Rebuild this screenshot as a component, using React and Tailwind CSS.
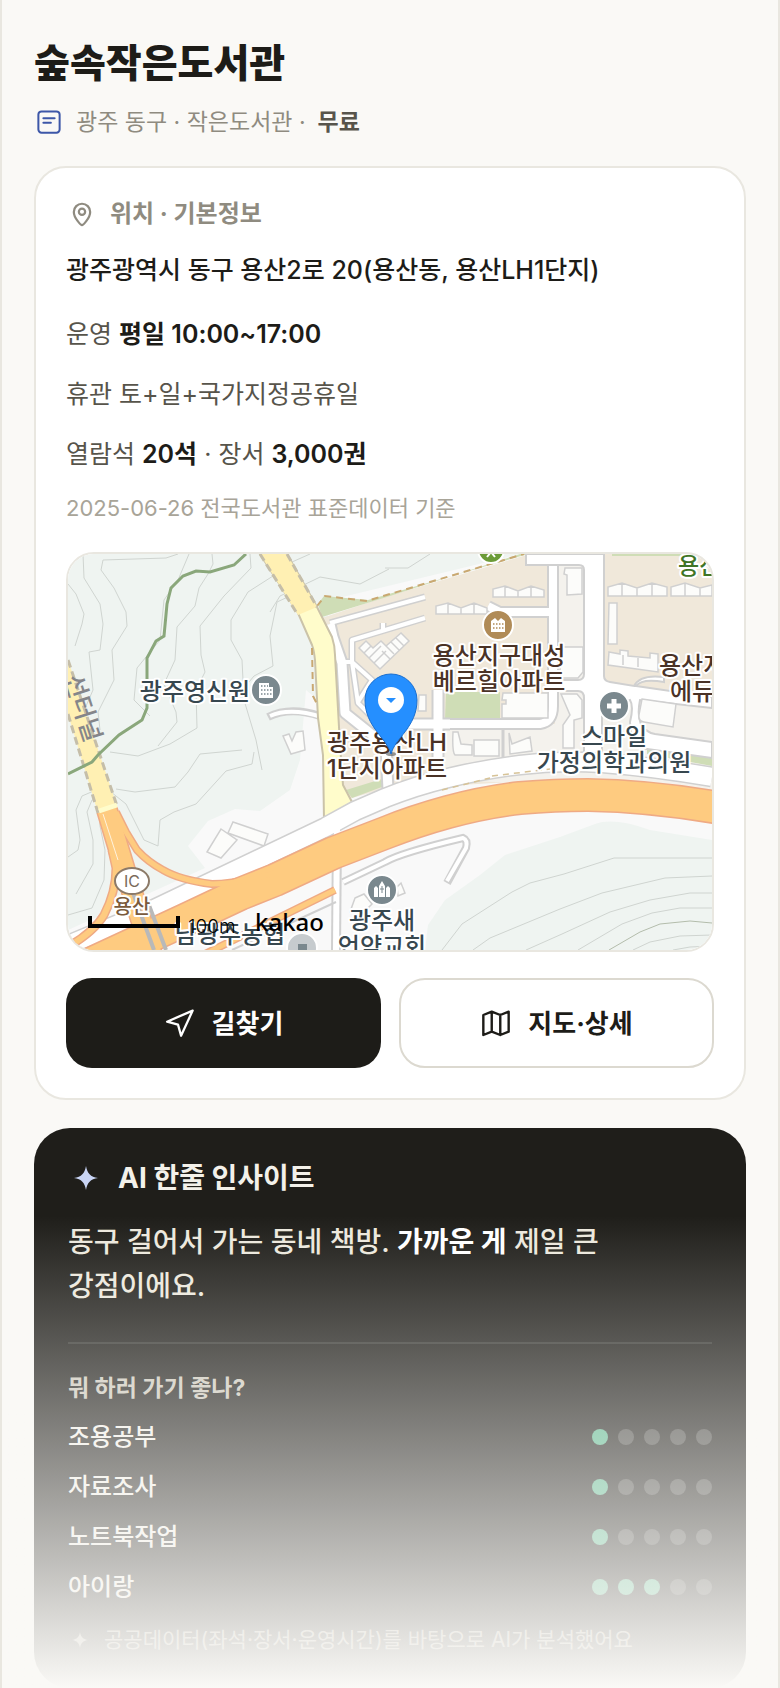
import React from "react";

const FONT = "font-['Inter','Noto_Sans_CJK_KR',sans-serif]";

function Contours() {
  return (
    <g fill="none" stroke="#cfd4d0" strokeWidth="1">
      <path d="M83 554 L84 578 L100 604 L103 624 L100 650 L89 652 L93 690 L80 720" />
      <path d="M178 554 L166 558 L103 560 L101 570 L114 588 L126 612 L127 626 L112 650 L114 680 L98 712 L100 730" />
      <path d="M68 584 L76 594 L84 614 L82 624 L75 646" />
      <path d="M212 554 L213 564 L208 574 L199 588 L195 606 L177 627 L175 660 L164 684 L176 712 L177 722 L158 746" />
      <path d="M250 554 L251 568 L224 596 L200 626 L201 655 L205 672 L196 690 L197 728 L170 744 L138 756 L110 752" />
      <path d="M273 576 L248 592 L231 620 L231 640 L242 660 L244 700 L256 740 L262 770" />
      <path d="M290 596 L277 602 L270 636 L273 666 L254 676 L244 688" />
      <path d="M389 569 L360 584 L320 577 L314 580 L280 596 L270 612" />
      <path d="M310 554 L292 562 L276 578" />
      <path d="M189 554 L178 580 L164 600 L160 640 L137 668 L134 700 L150 716" />
      <path d="M254 752 L252 764 L226 771 L196 804 L174 812 L160 820 L158 846 L144 840 L126 804 L106 788" />
      <path d="M242 750 L200 754 L188 772 L175 787 L135 792 L116 789" />
      <path d="M96 790 L82 796 L76 810 L80 840 L78 850 L68 857" />
      <path d="M104 796 L92 800 L87 812 L93 840 L93 864 L76 894" />
      <path d="M99 806 L100 826 L105 850 L104 880 L92 908 L68 915" />
      <path d="M442 950 L462 924 L512 892 L530 883 L564 874 L614 858 L712 858" />
      <path d="M473 950 L490 938 L560 909 L602 893 L665 878 L712 876" />
      <path d="M526 950 L562 934 L610 912 L650 900 L690 893 L712 893" />
      <path d="M578 950 L622 924 L652 913 L680 908 L712 908" />
      <path d="M609 950 L640 932 L660 924 L690 921 L712 923" stroke="#b3bcab" />
      <path d="M633 950 L650 942 L680 936 L712 935" />
      <path d="M673 950 L690 947 L712 946" />
      <path d="M385 568 L408 568 L430 554" />
    </g>
  );
}

function Label({ x, y, lines, fill = "#37474f", anchor = "middle", size = 24 }) {
  return (
    <text
      x={x}
      textAnchor={anchor}
      fontSize={size}
      fontWeight="500"
      fill={fill}
      stroke="#ffffff"
      strokeWidth="4"
      strokeLinejoin="round"
      paintOrder="stroke"
    >
      {lines.map((line, i) => (
        <tspan key={line} x={x} y={y + i * 26}>
          {line}
        </tspan>
      ))}
    </text>
  );
}

const FRONT_ROAD = "M68 945 L150 911 L326 827 L355 811 L385 798 Q415 786 448 778 Q485 769 520 765 Q560 760 602 763 Q655 767 712 777";
const HIGHWAY = "M90 964 L187 919 L240 894 L275 880 L333 853 L385 833 Q415 821 448 812 Q485 802 520 798 Q555 795 588 795 Q650 796 720 808";
const COMPLEX_ROADS =
  "M330 623 L425 597 M352 662 L372 680 L358 702 M342 662 H353 M425 618 L352 640 V662 L358 703 L372 717 M383 630 V623";

function LocationMap() {
  const road = "#d0d0d0";
  return (
    <svg
      viewBox="68 554 644 396"
      preserveAspectRatio="xMidYMid slice"
      className="block h-[396px] w-full"
      role="img"
      aria-label="숲속작은도서관 주변 지도"
    >
      <rect x="68" y="554" width="644" height="396" fill="#f9f9f9" />
      <path d="M68 554 H520 L330 600 L318 700 L306 690 L300 760 L290 790 L260 811 L235 809 L208 821 L188 846 L205 868 L68 930 Z" fill="#eff4f1" />
      <path d="M425 950 L428 925 L445 900 L480 875 L505 855 L560 837 L595 824 Q614 817 650 830 L712 840 V950 Z" fill="#eff4f1" />
      <Contours />

      <path d="M322 618 L385 597 L530 554 H712 V700 L540 780 L380 790 L345 800 L334 720 Z" fill="#f0e8da" />
      <path d="M555 564 H602 V686 H712 V790 L440 780 V724 H555 Z" fill="#f4f2ed" />
      <path d="M602 554 H712 V694 L610 684 Z" fill="#f0e8da" />
      <path d="M318 604 L324 596 L368 600 L528 554 H520 L390 596 L322 617 Z" fill="#cfddb6" />
      <path d="M612 554 H712 V556 H612 Z" fill="#cfddb6" />
      <path d="M317 606 L325 596 L367 601 L390 594 L524 554" fill="none" stroke="#c9a871" strokeWidth="2" strokeDasharray="7 5" />
      <path d="M446 692 H500 V719 H445 Z" fill="#cfddb6" />
      <path d="M647 745 L712 755 V766 L647 754 Z" fill="#cfddb6" />
      <path d="M346 790 L385 778 L390 784 L352 798 Z" fill="#cfddb6" />

      <g fill="none" stroke={road} strokeLinejoin="round">
        <path d={COMPLEX_ROADS} strokeWidth="7" />
        <path d="M330 624 L333 637 L342 663 L345 713 L370 733 L386 748 L388 790 M398 724 H450 M438 690 V768" strokeWidth="13" />
        <path d="M440 724 H540 Q553 722 553 706 V560 M553 612 H500 L488 606" strokeWidth="12" />
      </g>
      <g fill="none" stroke="#fff" strokeLinejoin="round">
        <path d={COMPLEX_ROADS} strokeWidth="4" />
        <path d="M330 624 L333 637 L342 663 L345 713 L370 733 L386 748 L388 790 M398 724 H450 M438 690 V768" strokeWidth="9" />
        <path d="M440 724 H540 Q553 722 553 706 V560 M553 612 H500 L488 606" strokeWidth="8" />
      </g>
      <path d="M503 728 V760" stroke={road} strokeWidth="3" />
      <path d="M526 554 V565 H579 Q584 565 584 570 V674 Q584 680 578 680 H558 V691 H578 Q584 691 584 698 V765 H602 V710 L630 700 Q634 706 630 722 Q630 740 640 748 L712 758 V742 L655 734 Q634 730 640 700 L712 708 V697 L636 686 Q642 678 664 682 V677 Q640 674 634 686 L610 682 Q604 681 604 676 V554 Z" fill="#fff" stroke={road} strokeWidth="2" />

      <g fill="#fcfcfa" stroke={road} strokeWidth="1.5">
        <path d="M493 597 V589 L505 586 L518 591 L531 586 L544 590 V597 Z M505 586 V597 M518 591 V597 M531 586 V597" />
        <path d="M436 614 V606 L448 603 L461 608 L474 603 L487 608 V614 Z M448 603 V614 M461 608 V614 M474 603 V614" />
        <path d="M608 596 V587 L622 583 L637 588 L652 583 L667 587 V596 Z M622 583 V596 M637 588 V596 M652 583 V596" />
        <path d="M671 596 V587 L685 583 L700 588 L712 585 V596 Z M685 583 V596 M700 588 V596" />
        <path d="M609 603 H617 V644 H608 Z" />
        <path d="M609 652 L620 654 V650 L628 651 V656 L650 658 V653 L658 654 V672 L608 665 Z M623 655 V665 M638 657 V667" />
        <path d="M565 568 H582 V594 L567 595 V575 L564 574 Z" />
        <path d="M560 647 H583 V672 L578 678 H560 Z" />
        <path d="M503 693 H548 V718 H502 V704 H506 V700 H502 Z" />
        <path d="M561 694 H577 L582 700 V718 L574 720 V748 H563 V725 L570 715 Z" />
        <path d="M642 699 L676 704 L673 727 L644 722 Q638 721 639 715 Z" />
        <path d="M453 732 H458 L461 744 L472 745 V755 H455 Q452 752 453 732 Z M474 740 H499 V756 H474 Z M509 733 L512 744 L530 737 L532 751 L510 754 Z" />
        <path d="M419 695 H426 V711 H418 Z" />
        <path d="M359 648 L366 641 L373 648 L381 641 L386 646 L401 633 L409 641 L380 669 Z M364 653 L371 646 M369 658 L381 646 M374 663 L386 651 M382 651 L390 659 M386 646 L394 654 M391 642 L399 650 M396 638 L404 646" />
        <path d="M283 736 L289 734 L292 741 L296 732 L303 731 L305 750 L291 754 Z" />
        <path d="M233 822 L268 834 L264 846 L228 833 Z M221 829 L237 840 L221 858 L207 852 Z" />
        <path d="M355 898 L364 894 L372 904 L362 914 L350 912 Z M397 887 L401 883 L405 893 L398 896 Z" />
      </g>
      <path d="M268 717 Q290 706 320 716" fill="none" stroke={road} strokeWidth="8" />
      <path d="M270 716 Q290 707 322 717" fill="none" stroke="#fff" strokeWidth="4" />

      <path d="M260 554 H287 L317 607 L332 637 Q335 646 335 655 L340 745 L343 785 L352 802 L324 820 L323 755 L318 718 L315 660 Q314 650 312 645 L298 613 Z" fill="#fffccb" stroke="#cbc3a9" strokeWidth="2" />
      <path d="M260 554 H287 L317 607 L298 615 Z" fill="#fff0b3" />
      <path d="M260 554 L298 615 M287 554 L317 607" stroke="#c5bea9" strokeWidth="3" strokeDasharray="8 4" />
      <path d="M312 648 L313 696 L317 704" fill="none" stroke="#c9a871" strokeWidth="2" strokeDasharray="7 5" />

      <path d={FRONT_ROAD} fill="none" stroke={road} strokeWidth="21" />
      <path d={FRONT_ROAD} fill="none" stroke="#fff" strokeWidth="18" />
      <path d="M337 836 L336 950" stroke={road} strokeWidth="10" />
      <path d="M337 822 L336 950" stroke="#fff" strokeWidth="6" />
      <path d="M343 882 L385 862 Q400 853 463 838 Q468 840 466 848 L447 883" fill="none" stroke={road} strokeWidth="8" />
      <path d="M343 882 L385 862 Q400 853 463 838 Q468 840 466 848 L447 881" fill="none" stroke="#fff" strokeWidth="4" />
      <path d="M232 950 L336 902" stroke={road} strokeWidth="2" />

      <g fill="none" stroke="#efaa84" strokeLinejoin="round">
        <path d={HIGHWAY} strokeWidth="34" />
        <path d="M107 810 L125 870 L152 954" strokeWidth="22" />
        <path d="M116 812 L126 832 L137 850 Q148 862 163 870 Q180 880 212 884 Q235 884 275 873" strokeWidth="8" />
        <path d="M112 850 L116 868 Q116 892 104 915 Q94 932 66 948" strokeWidth="9" />
        <path d="M205 954 L335 890" strokeWidth="8" />
      </g>
      <g fill="none" stroke="#fecb80" strokeLinejoin="round">
        <path d={HIGHWAY} strokeWidth="31" />
        <path d="M107 810 L125 870 L152 954" strokeWidth="19" />
        <path d="M116 812 L126 832 L137 850 Q148 862 163 870 Q180 880 212 884 Q235 884 275 873" strokeWidth="5" />
        <path d="M112 850 L116 868 Q116 892 104 915 Q94 932 66 948" strokeWidth="6" />
        <path d="M205 954 L335 890" strokeWidth="5" />
      </g>
      <path d="M103 814 L118 860" stroke="#fff3dd" strokeWidth="1" />
      <path d="M132 890 L154 950 M147 900 L166 950" stroke="#b9b9b9" strokeWidth="4" />

      <path d="M68 660 L117 806 L98 813 L68 714 Z" fill="#fff0b3" />
      <path d="M68 660 L117 806 M68 714 L98 813" stroke="#c5bea9" strokeWidth="3" strokeDasharray="8 4" />
      <path d="M99 811 L117 805" stroke="#fffccb" strokeWidth="5" />
      <path d="M246 554 L234 565 L210 572 L196 571 L183 576 L171 588 L167 604 L164 636 L156 641 L147 658 L147 708 L142 720 L119 735 L98 755 L92 762 L68 774" fill="none" stroke="#8aa77b" strokeWidth="3" />
      <text x="0" y="0" transform="translate(64 678) rotate(72)" fontSize="25" fontWeight="500" fill="#85868a">
        선터널
      </text>
      <path d="M442 790 L490 778 M492 776 L550 769" stroke="#d7c397" strokeWidth="1.5" strokeDasharray="6 5" />

      <g stroke="#fff" strokeWidth="2">
        <circle cx="491" cy="550" r="13" fill="#6b9b37" />
        <circle cx="498" cy="625" r="15" fill="#b08b57" />
        <circle cx="266" cy="690" r="15" fill="#7a888e" />
        <circle cx="614" cy="706" r="15" fill="#7a888e" />
        <circle cx="382" cy="890" r="15" fill="#7a888e" />
        <circle cx="302" cy="948" r="15" fill="#c6cbce" />
      </g>
      <path d="M487 557 L491 552 L495 557" fill="none" stroke="#fff" strokeWidth="2" />
      <path d="M491 621 L495 618 L498 621 L501 618 L505 621 V632 H491 Z" fill="#fff" />
      <path d="M259 683 H269 V687 H273 V698 H259 Z" fill="#fff" />
      <path d="M261 686 H268 M261 690 H272 M261 694 H272" stroke="#7a888e" strokeWidth="1.5" strokeDasharray="1.5 1.5" />
      <path d="M493 624 H504 M493 628 H504" stroke="#b08b57" strokeWidth="1.5" strokeDasharray="1.5 1.5" />
      <path d="M614 699 V713 M607 706 H621" stroke="#fff" strokeWidth="5" />
      <path d="M374 897 V888 L376 886 L378 888 V897 Z M379 897 V886 L382 881 L385 886 V897 Z M386 897 V888 L388 886 L390 888 V897 Z" fill="#fff" />
      <path d="M382 886 V893 M380 889 H384" stroke="#7a888e" strokeWidth="1" />
      <rect x="298" y="944" width="9" height="6" fill="#7a888e" />

      <Label x={195} y={700} lines={["광주영신원"]} />
      <Label x={499} y={664} lines={["용산지구대성", "베르힐아파트"]} fill="#4a3226" />
      <Label x={387} y={751} lines={["광주용산LH", "1단지아파트"]} fill="#4a3226" />
      <Label x={614} y={745} lines={["스마일", "가정의학과의원"]} />
      <Label x={659} y={674} anchor="start" lines={["용산지"]} fill="#4a3226" />
      <Label x={670} y={700} anchor="start" lines={["에듀"]} fill="#4a3226" />
      <Label x={678} y={574} anchor="start" lines={["용산"]} fill="#3f7526" size={23} />
      <Label x={382} y={929} lines={["광주새", "언약교회"]} />
      <Label x={230} y={943} lines={["남광주농협"]} />
      <Label x={132} y={914} lines={["용산"]} size={20} fill="#7a5a3c" />
      <ellipse cx="132" cy="881" rx="17" ry="13" fill="#fff" stroke="#8c7a68" strokeWidth="2" />
      <text x="132" y="887" textAnchor="middle" fontSize="16" fill="#7a6a5a">
        IC
      </text>

      <ellipse cx="391" cy="754" rx="5" ry="2" fill="#555" opacity="0.6" />
      <path d="M391 754 C387 738 365 727 365 700 A26 26 0 0 1 417 700 C417 727 395 738 391 754 Z" fill="#258fff" stroke="#1a6fd0" strokeWidth="1" />
      <circle cx="391" cy="700" r="13" fill="#fff" />
      <path d="M386 698 H396 L391 703 Z" fill="#258fff" />

      <path d="M90 916 V926 H178 V916" fill="none" stroke="#000" strokeWidth="4" />
      <text x="188" y="933" fontSize="19" fontWeight="300" fill="#000">
        100m
      </text>
      <text x="255" y="931" fontSize="24" fontWeight="500" fill="#000" className="font-['Noto_Sans',sans-serif]">
        kakao
      </text>
    </svg>
  );
}

function Icon({ className, children }) {
  return (
    <svg
      viewBox="0 0 24 24"
      fill="none"
      stroke="currentColor"
      strokeLinecap="round"
      strokeLinejoin="round"
      aria-hidden="true"
      className={className}
    >
      {children}
    </svg>
  );
}

function Sparkle({ className }) {
  return (
    <svg viewBox="0 0 24 24" fill="currentColor" aria-hidden="true" className={className}>
      <path d="M12 0 C13.2 7.500 16.500 10.800 24 12 C16.500 13.200 13.200 16.500 12 24 C10.800 16.500 7.500 13.200 0 12 C7.500 10.800 10.800 7.500 12 0 Z" />
    </svg>
  );
}

const ratings = [
  ["조용공부", 1],
  ["자료조사", 1],
  ["노트북작업", 1],
  ["아이랑", 3],
];

function Rating({ name, score }) {
  return (
    <li className="flex h-[50px] items-center justify-between">
      <span className="text-2xl font-medium text-[#f3f1ea]">{name}</span>
      <span className="flex gap-2.5" role="img" aria-label={`${name} ${score}/5`}>
        {[1, 2, 3, 4, 5].map((n) => (
          <span
            key={n}
            className={n <= score ? "size-4 rounded-full bg-[#5bb78e]" : "size-4 rounded-full bg-white/20"}
          />
        ))}
      </span>
    </li>
  );
}

export default function App() {
  return (
    <main className={`relative border-x-2 border-[#e9e7e0] bg-[#faf9f6] px-8 pt-9 text-[#1d1c18] ${FONT}`}>
      <h1 className="text-[39px] leading-[54px] font-extrabold">숲속작은도서관</h1>
      <div className="mt-3.5 flex h-9 items-center text-[23px] text-[#8f8b80]">
        <Icon className="mr-3 size-[30px] text-[#3d57a8]">
          <rect x="3.5" y="3.5" width="17" height="17" rx="2.5" strokeWidth="1.6" />
          <path d="M7.5 9h9M7.5 12.6h6" strokeWidth="1.6" />
        </Icon>
        <span>광주 동구 · 작은도서관 ·</span>
        <strong className="ml-3 font-semibold text-[#57544b]">무료</strong>
      </div>

      <section className="mt-[26px] rounded-[32px] border-2 border-[#e9e7e0] bg-white p-[30px]">
        <h2 className="flex h-8 items-center gap-3.5 text-2xl font-bold text-[#8f8b80]">
          <Icon className="ml-0.5 size-7">
            <path d="M12 21.500c-.8 0-7-6-7-11.300a7 7 0 0 1 14 0c0 5.300-6.200 11.300-7 11.300Z" strokeWidth="1.9" />
            <circle cx="12" cy="10" r="2.700" strokeWidth="1.9" />
          </Icon>
          위치 · 기본정보
        </h2>
        <p className="mt-5 text-[25px] leading-10 font-medium">광주광역시 동구 용산2로 20(용산동, 용산LH1단지)</p>
        <div className="mt-[22px] flex flex-col gap-4 text-[25px] leading-[44px] text-[#57544b]">
          <p>
            운영 <strong className="font-semibold text-[#1d1c18]">평일 10:00~17:00</strong>
          </p>
          <p>휴관 토+일+국가지정공휴일</p>
          <p>
            열람석 <strong className="font-semibold text-[#1d1c18]">20석</strong> · 장서{" "}
            <strong className="font-semibold text-[#1d1c18]">3,000권</strong>
          </p>
        </div>
        <p className="mt-4 text-[22px] leading-8 text-[#a8a498]">2025-06-26 전국도서관 표준데이터 기준</p>

        <div className="mt-7 overflow-hidden rounded-[28px] border-2 border-[#e9e7e0]">
          <LocationMap />
        </div>

        <div className="mt-[26px] grid grid-cols-2 gap-[18px] text-[26px] font-bold">
          <button type="button" className="flex h-[90px] items-center justify-center gap-4 rounded-[26px] bg-[#1d1c18] text-white">
            <Icon className="size-8">
              <path d="M21.500 2.700 2.300 11l8.200 2.200 2.300 8.300L21.500 2.700Z" strokeWidth="1.700" />
            </Icon>
            길찾기
          </button>
          <button type="button" className="flex h-[90px] items-center justify-center gap-4 rounded-[26px] border-2 border-[#dcd9d0] bg-white">
            <Icon className="size-8">
              <path d="m2.500 6 6.300-2.500 6.400 2.500 6.300-2.500v15L15.200 21l-6.400-2.500L2.500 21V6Z M8.800 3.500v15 M15.200 6v15" strokeWidth="1.800" />
            </Icon>
            지도·상세
          </button>
        </div>
      </section>

      <section className="mt-7 rounded-[36px] bg-[#1f1e1a] px-[34px] py-8">
        <h2 className="flex h-9 items-center gap-5 text-[28px] font-bold text-[#f3f1ea]">
          <Sparkle className="ml-1.5 size-6 text-[#c9d5f5]" />
          AI 한줄 인사이트
        </h2>
        <p className="mt-6 max-w-[560px] text-[28px] leading-[44px] font-medium text-[#ece8dd]">
          동구 걸어서 가는 동네 책방. <strong className="font-bold text-white">가까운 게</strong> 제일 큰 강점이에요.
        </p>
        <hr className="mt-[34px] border-t-2 border-white/10" />
        <h3 className="mt-7 text-[23px] leading-8 font-bold text-[#cbc7bb]">뭐 하러 가기 좋나?</h3>
        <ul className="mt-2">
          {ratings.map(([name, score]) => (
            <Rating key={name} name={name} score={score} />
          ))}
        </ul>
        <p className="mt-3 flex h-8 items-center gap-4 text-[21px] text-[#a8a498]">
          <Sparkle className="ml-1 size-4" />
          공공데이터(좌석·장서·운영시간)를 바탕으로 AI가 분석했어요
        </p>
      </section>

      <div className="pointer-events-none absolute inset-x-0 bottom-0 h-[472px] bg-linear-to-b from-[#faf9f6]/0 to-[#faf9f6]" />
    </main>
  );
}
